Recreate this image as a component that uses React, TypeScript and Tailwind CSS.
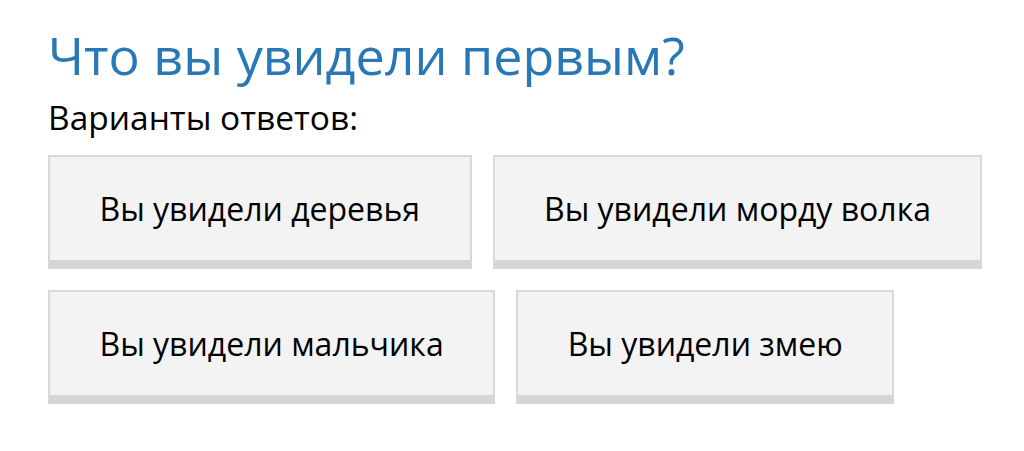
import React from "react";

const options = [
  "Вы увидели деревья",
  "Вы увидели морду волка",
  "Вы увидели мальчика",
  "Вы увидели змею",
];

export default function App() {
  return (
    <div className="w-[1024px] h-[451px] bg-white pl-[48px] pr-[40px] pt-[20px] font-['Open_Sans',sans-serif]">
      <h1 className="text-[52px] leading-[70px] text-[#2878b5] font-normal">
        Что вы увидели первым?
      </h1>
      <p className="text-[33.5px] leading-[44px] text-black mt-[5px]">Варианты ответов:</p>
      <div className="flex flex-wrap gap-[21px] mt-[16px] w-[940px]">
        {options.map((o) => (
          <button
            key={o}
            className="bg-[#f3f3f3] border-2 border-b-[9px] border-[#d9d9d9] border-b-[#d6d6d6] px-[49.5px] py-[30px] text-[32px] leading-[43px] text-black"
          >
            {o}
          </button>
        ))}
      </div>
    </div>
  );
}
